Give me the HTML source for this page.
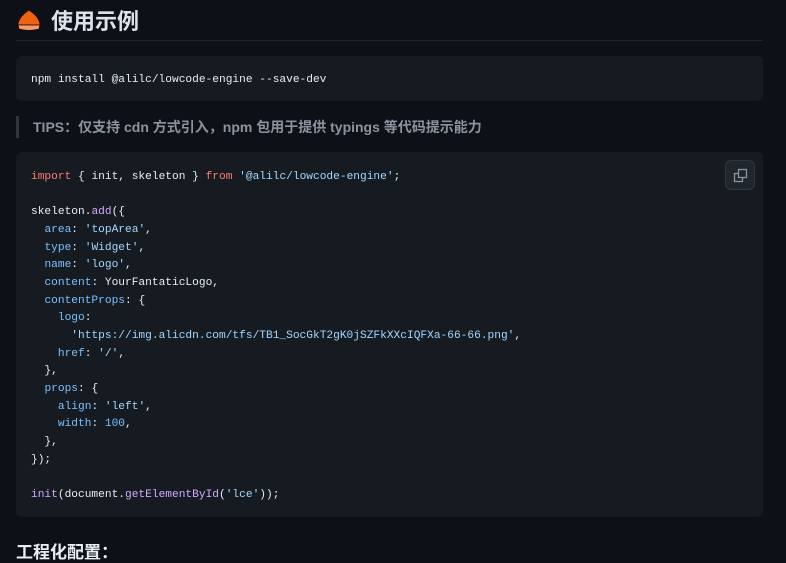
<!DOCTYPE html>
<html><head><meta charset="utf-8"><style>
body{margin:0;background:#0d1117;width:786px;height:551px;overflow:hidden;font-family:"Liberation Sans","Noto Sans CJK SC",sans-serif;color:#e6edf3}
h2{position:absolute;left:16px;top:6px;margin:0;width:747px;height:34px;border-bottom:1px solid #21262d;font-size:22px;line-height:32px;font-weight:bold;color:#dde3ea}
.logo{display:inline-block;vertical-align:middle;margin-right:9px;position:relative;top:-2px}
pre{position:absolute;left:16px;width:747px;margin:0;background:#161b22;border-radius:6px;box-sizing:border-box;padding:0 15px;font-family:"Liberation Mono",monospace;font-size:11.2px;line-height:17.67px;color:#e6edf3;white-space:pre}
.k{color:#ff7b72}.s{color:#a5d6ff}.p{color:#79c0ff}.f{color:#d2a8ff}
.bq{position:absolute;left:16px;top:116px;height:22px;border-left:3px solid #30363d;padding-left:14px;color:#8b949e;font-size:14px;line-height:22px;font-weight:bold}
.copy{position:absolute;left:725px;top:160px;width:30px;height:30px;border:1px solid #30363d;border-radius:6px;box-sizing:border-box;background:#21262d}
h3{position:absolute;left:16px;top:538px;margin:0;font-size:17px;font-weight:bold;color:#e6edf3}
</style></head><body>
<h2><svg class="logo" width="26" height="24" viewBox="0 0 26 24"><path d="M13 1 C7 5 2 10 2 16 L24 16 C24 10 19 5 13 1Z" fill="#f0620f" stroke="#1a0a00" stroke-width="0.8"/><path d="M2 16 L24 16 L23 20 Q13 23 3 20Z" fill="#f59a6a" stroke="#1a0a00" stroke-width="0.8"/></svg>使用示例</h2>
<pre style="top:56px;height:45px;padding-top:16px">npm install @alilc/lowcode-engine --save-dev</pre>
<div class="bq">TIPS：仅支持 cdn 方式引入，npm 包用于提供 typings 等代码提示能力</div>
<pre style="top:152px;height:365px;padding-top:17px"><span class="k">import</span> { init, skeleton } <span class="k">from</span> <span class="s">'@alilc/lowcode-engine'</span>;

skeleton.<span class="f">add</span>({
  <span class="p">area</span>: <span class="s">'topArea'</span>,
  <span class="p">type</span>: <span class="s">'Widget'</span>,
  <span class="p">name</span>: <span class="s">'logo'</span>,
  <span class="p">content</span>: YourFantaticLogo,
  <span class="p">contentProps</span>: {
    <span class="p">logo</span>:
      <span class="s">'https://img.alicdn.com/tfs/TB1_SocGkT2gK0jSZFkXXcIQFXa-66-66.png'</span>,
    <span class="p">href</span>: <span class="s">'/'</span>,
  },
  <span class="p">props</span>: {
    <span class="p">align</span>: <span class="s">'left'</span>,
    <span class="p">width</span>: <span class="p">100</span>,
  },
});

<span class="f">init</span>(document.<span class="f">getElementById</span>(<span class="s">'lce'</span>));</pre>
<div class="copy"><svg width="28" height="28" viewBox="0 0 28 28"><rect x="8.5" y="12.5" width="8" height="8" fill="none" stroke="#8b949e" stroke-width="1.3"/><rect x="12.5" y="8.5" width="8" height="8" fill="#21262d" stroke="#8b949e" stroke-width="1.3"/></svg></div>
<h3>工程化配置：</h3>
</body></html>
